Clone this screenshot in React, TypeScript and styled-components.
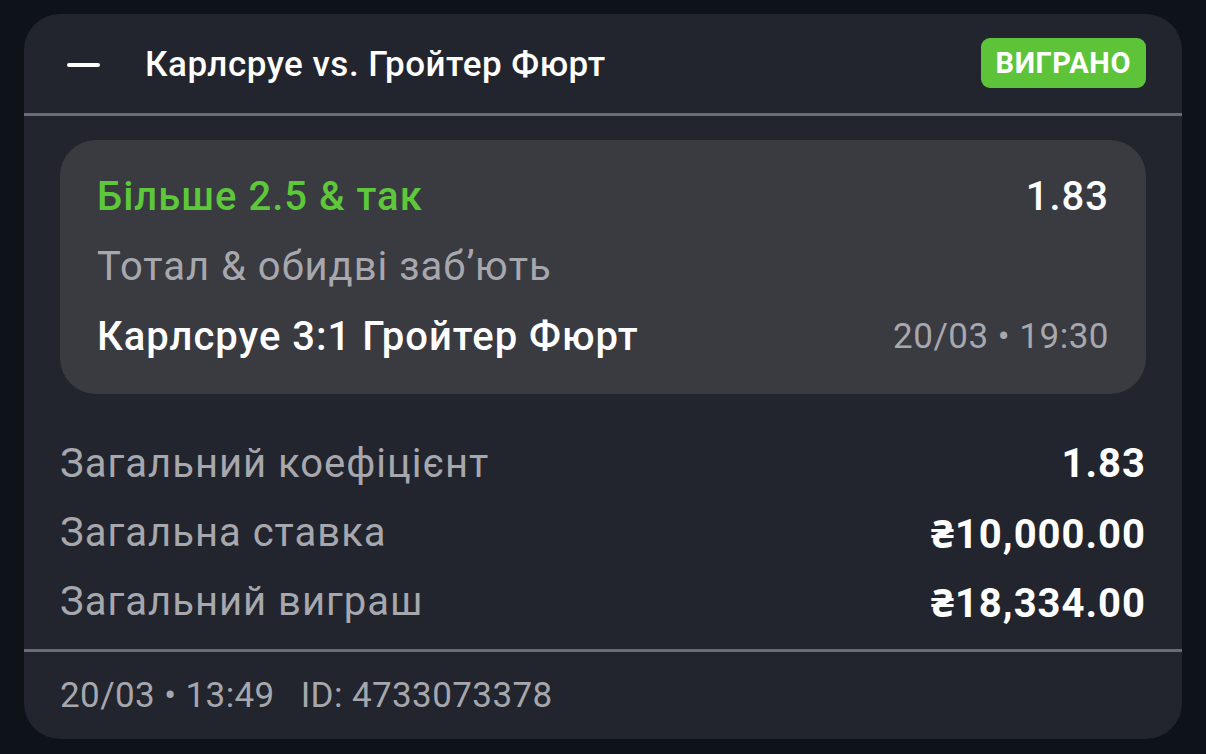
import React from "react";
import styled, { createGlobalStyle } from "styled-components";

const Global = createGlobalStyle`
  html, body { margin: 0; padding: 0; background: #0e131a; }
  body { font-family: Roboto, "Noto Sans", sans-serif; -webkit-font-smoothing: antialiased; }
`;

const Page = styled.div`
  width: 1206px;
  height: 754px;
  box-sizing: border-box;
  padding: 14px 24px 15px 24px;
  background: #0e131a;
`;

const Card = styled.div`
  height: 725px;
  background: #22252d;
  border-radius: 36px;
  display: flex;
  flex-direction: column;
  overflow: hidden;
`;

const Header = styled.div`
  height: 99px;
  display: flex;
  align-items: center;
  padding: 0 36px 0 43px;
  gap: 45px;
`;

const Minus = styled.span`
  width: 33px;
  height: 4px;
  border-radius: 2px;
  background: #ffffff;
  margin-top: 3px;
`;

const Title = styled.div`
  flex: 1;
  color: #ffffff;
  font-size: 35px;
  font-weight: 500;
  letter-spacing: 0.5px;
  margin-top: 2px;
`;

const Badge = styled.div`
  background: #5dc43a;
  color: #ffffff;
  font-weight: 700;
  font-size: 29px;
  letter-spacing: 0.6px;
  height: 50px;
  border-radius: 9px;
  padding: 0 15px;
  display: flex;
  align-items: center;
  margin-top: -1px;
`;

const Divider = styled.div`
  height: 3px;
  background: #6b6c73;
  flex-shrink: 0;
`;

const Body = styled.div`
  padding: 24px 36px 13px 36px;
  display: flex;
  flex-direction: column;
`;

const Selection = styled.div`
  background: #3a3a41;
  border-radius: 36px;
  padding: 21px 37px 23px 37px;
  display: flex;
  flex-direction: column;
  margin-bottom: 35px;
`;

const Line = styled.div`
  height: 70px;
  display: flex;
  align-items: center;
  justify-content: space-between;
`;

const Text = styled.span<{ $color: string; $size: number; $weight: number; $ls?: number }>`
  color: ${(p) => p.$color};
  font-size: ${(p) => p.$size}px;
  font-weight: ${(p) => p.$weight};
  letter-spacing: ${(p) => p.$ls ?? 1}px;
  white-space: nowrap;
`;

const SummaryRow = styled.div`
  height: 69px;
  display: flex;
  align-items: center;
  justify-content: space-between;
`;

const Footer = styled.div`
  height: 86px;
  display: flex;
  align-items: center;
  padding: 0 36px;
  gap: 26px;
  color: #a6a7ad;
  font-size: 35px;
  letter-spacing: 0.4px;
`;

const GREEN = "#5cc83a";
const GRAY = "#a7a8ae";
const WHITE = "#ffffff";

const rows = [
  { label: "Загальний коефіцієнт", value: "1.83" },
  { label: "Загальна ставка", value: "₴10,000.00" },
  { label: "Загальний виграш", value: "₴18,334.00" },
];

export default function App() {
  return (
    <>
      <Global />
      <Page>
        <Card>
          <Header>
            <Minus />
            <Title>Карлсруе vs. Гройтер Фюрт</Title>
            <Badge>ВИГРАНО</Badge>
          </Header>
          <Divider />
          <Body>
            <Selection>
              <Line>
                <Text $color={GREEN} $size={40} $weight={500}>Більше 2.5 &amp; так</Text>
                <Text $color={WHITE} $size={40} $weight={500}>1.83</Text>
              </Line>
              <Line>
                <Text $color={GRAY} $size={40} $weight={400}>Тотал &amp; обидві заб’ють</Text>
              </Line>
              <Line>
                <Text $color={WHITE} $size={40} $weight={500}>Карлсруе 3:1 Гройтер Фюрт</Text>
                <Text $color={GRAY} $size={35} $weight={400} $ls={0.5}>20/03 • 19:30</Text>
              </Line>
            </Selection>
            {rows.map((r) => (
              <SummaryRow key={r.label}>
                <Text $color={GRAY} $size={40} $weight={400}>{r.label}</Text>
                <Text $color={WHITE} $size={40} $weight={700}>{r.value}</Text>
              </SummaryRow>
            ))}
          </Body>
          <Divider />
          <Footer>
            <span>20/03 • 13:49</span>
            <span>ID: 4733073378</span>
          </Footer>
        </Card>
      </Page>
    </>
  );
}
